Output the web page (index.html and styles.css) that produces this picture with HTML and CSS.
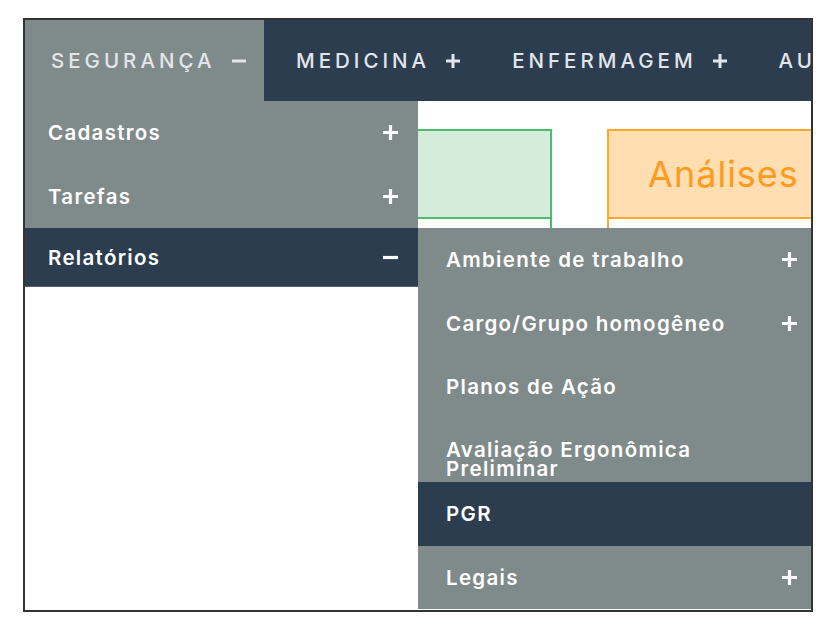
FILE: index.html
```html
<!DOCTYPE html>
<html lang="pt-BR">
<head>
<meta charset="utf-8">
<title>Menu</title>
<link rel="stylesheet" href="styles.css">
</head>
<body>
<div class="frame">
  <nav class="topnav">
    <div class="tab tab-active"><span class="tab-label">SEGURANÇA</span><svg class="ico" viewBox="0 0 14 14"><path d="M0 7H14"/></svg></div>
    <div class="tab"><span class="tab-label">MEDICINA</span><svg class="ico" viewBox="0 0 14 14"><path d="M0 7H14M7 0V14"/></svg></div>
    <div class="tab"><span class="tab-label">ENFERMAGEM</span><svg class="ico" viewBox="0 0 14 14"><path d="M0 7H14M7 0V14"/></svg></div>
    <div class="tab"><span class="tab-label">AUDITORIA</span><svg class="ico" viewBox="0 0 14 14"><path d="M0 7H14M7 0V14"/></svg></div>
  </nav>
  <main class="content">
    <div class="card card-green"><div class="card-head"></div><div class="card-body"></div></div>
    <div class="card card-orange"><div class="card-head">Análises</div><div class="card-body"></div></div>
  </main>
  <div class="dropdown">
    <div class="item"><span>Cadastros</span><svg class="ico" viewBox="0 0 14 14"><path d="M0 7H14M7 0V14"/></svg></div>
    <div class="item"><span>Tarefas</span><svg class="ico" viewBox="0 0 14 14"><path d="M0 7H14M7 0V14"/></svg></div>
    <div class="item item-open"><span>Relatórios</span><svg class="ico" viewBox="0 0 14 14"><path d="M0 7H14"/></svg></div>
    <div class="submenu">
      <div class="sub"><span>Ambiente de trabalho</span><svg class="ico" viewBox="0 0 14 14"><path d="M0 7H14M7 0V14"/></svg></div>
      <div class="sub"><span>Cargo/Grupo homogêneo</span><svg class="ico" viewBox="0 0 14 14"><path d="M0 7H14M7 0V14"/></svg></div>
      <div class="sub"><span>Planos de Ação</span></div>
      <div class="sub"><span class="two-line">Avaliação Ergonômica<br>Preliminar</span></div>
      <div class="sub sub-active"><span>PGR</span></div>
      <div class="sub"><span>Legais</span><svg class="ico" viewBox="0 0 14 14"><path d="M0 7H14M7 0V14"/></svg></div>
    </div>
  </div>
</div>
</body>
</html>
```

FILE: styles.css
```css
* { box-sizing: border-box; }
html, body { margin: 0; padding: 0; background: #fff; }
body { padding: 18px 0 0 23px; font-family: Inter, "DejaVu Sans", sans-serif; }

.frame {
  position: relative;
  width: 790px;
  height: 594px;
  border: 2px solid #333;
  overflow: hidden;
  background: #fff;
}

.topnav {
  display: flex;
  height: 81px;
  background: #2c3d50;
  white-space: nowrap;
}
.tab {
  flex-shrink: 0;
  display: flex;
  align-items: center;
  gap: 16px;
  padding: 0 20px 0 32px;
  color: #e2e6ea;
  font-size: 20.5px;
  font-weight: 500;
  letter-spacing: 4px;
}
.tab-active { background: #7f8a8a; padding-left: 26px; padding-right: 20px; width: 239px; }
.tab .ico { width: 14px; height: 14px; }

.ico { flex-shrink: 0; }
.ico path { stroke: currentColor; stroke-width: 3; fill: none; }

.content {
  display: flex;
  gap: 55px;
  padding: 28px 0 0 294px;
}
.card {
  flex-shrink: 0;
  width: 233px;
  border: 2px solid;
  border-bottom: none;
  height: 140px;
}
.card-head {
  height: 88px;
  border-bottom: 2px solid;
  display: flex;
  align-items: center;
  justify-content: center;
  font-size: 36px;
  font-weight: 400;
  letter-spacing: 1px;
}
.card-green { border-color: #4dbb6d; }
.card-green .card-head { background: #d5ecdb; border-color: #4dbb6d; }
.card-orange { border-color: #ffa62b; }
.card-orange .card-head { background: #ffdfb1; border-color: #ffa62b; color: #ff9a1e; }

.dropdown {
  position: absolute;
  top: 81px;
  left: 0;
  width: 393px;
  background: #7f8a8a;
  color: #fff;
}
.item, .sub {
  display: flex;
  align-items: center;
  justify-content: space-between;
  height: 63.5px;
  font-size: 20.5px;
  font-weight: 600;
  letter-spacing: 1.3px;
}
.item { padding: 0 20px 0 23px; }
.item .ico { width: 15px; height: 15px; }
.item-open { background: #2c3d50; height: 59px; border-bottom: 1px solid #55606c; }

.submenu {
  position: absolute;
  left: 100%;
  top: 127px;
  width: 393px;
  background: #7f8a8a;
}
.sub { padding: 0 14px 0 28px; overflow: hidden; }
.sub .ico { width: 15px; height: 15px; }
.sub-active { background: #2c3d50; }
.two-line { line-height: 19px; align-self: flex-start; padding-top: 21px; }
```
